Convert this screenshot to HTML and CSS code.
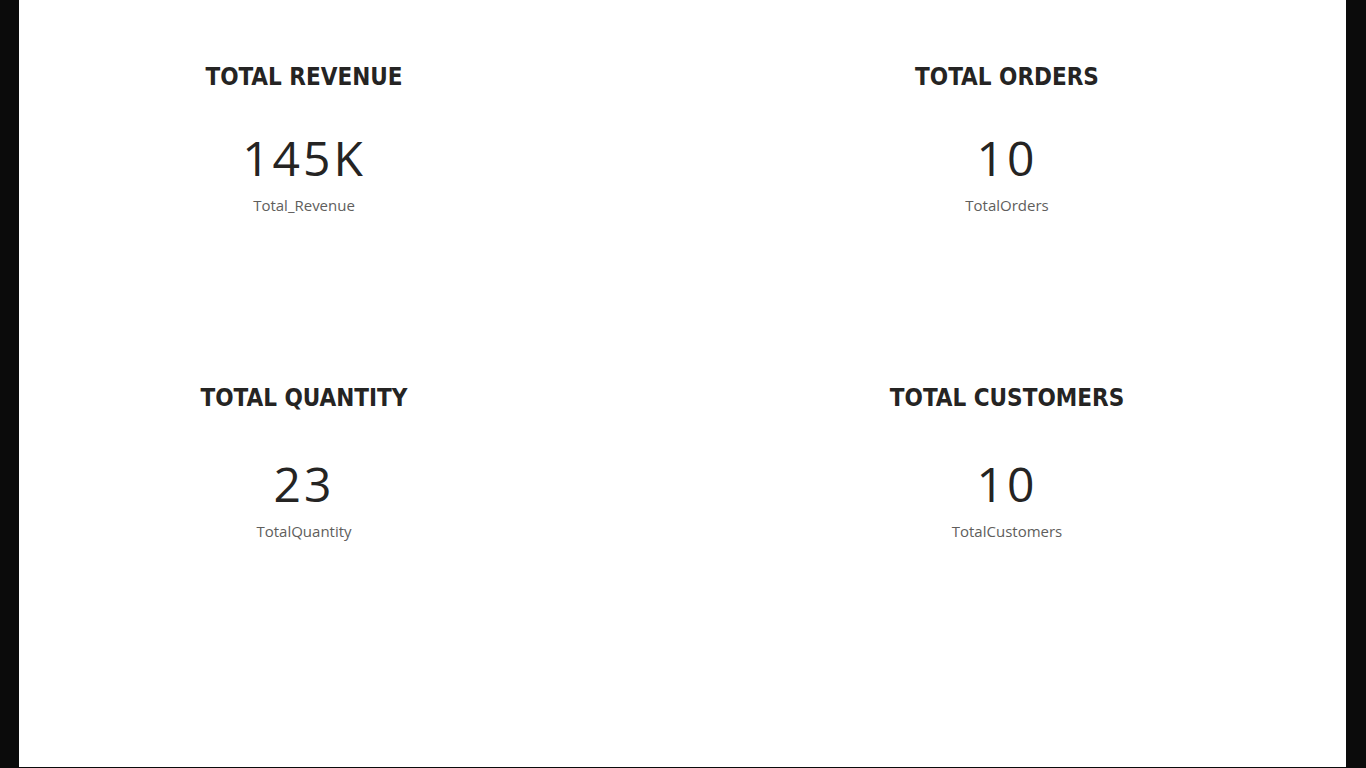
FILE: index.html
```html
<!DOCTYPE html>
<html>
<head>
<meta charset="utf-8">
<link rel="stylesheet" href="styles.css">
</head>
<body>
<div class="canvas">
  <div class="grid">
    <div class="card card-left">
      <div class="title">TOTAL REVENUE</div>
      <div class="value">145K</div>
      <div class="label">Total_Revenue</div>
    </div>
    <div class="card card-right">
      <div class="title">TOTAL ORDERS</div>
      <div class="value">10</div>
      <div class="label">TotalOrders</div>
    </div>
    <div class="card card-left card-low">
      <div class="title">TOTAL QUANTITY</div>
      <div class="value">23</div>
      <div class="label">TotalQuantity</div>
    </div>
    <div class="card card-right card-low">
      <div class="title">TOTAL CUSTOMERS</div>
      <div class="value">10</div>
      <div class="label">TotalCustomers</div>
    </div>
  </div>
</div>
</body>
</html>
```

FILE: styles.css
```css
html, body {
  margin: 0;
  padding: 0;
  background: #0b0b0b;
  width: 1366px;
  height: 768px;
  overflow: hidden;
}
.canvas {
  margin-left: 19px;
  width: 1327px;
  height: 767px;
  background: #ffffff;
}
.grid {
  display: grid;
  grid-template-columns: 570px 1fr;
  grid-auto-rows: 326px;
  padding-top: 60px;
}
.card {
  display: flex;
  flex-direction: column;
  align-items: center;
}
.card-right {
  padding-left: 79px;
}
.title {
  font-family: "DejaVu Sans Condensed", "DejaVu Sans", sans-serif;
  font-weight: bold;
  font-size: 24px;
  line-height: 34px;
  color: #252423;
}
.value {
  margin-top: 34px;
  font-family: "Open Sans", sans-serif;
  font-weight: 400;
  font-size: 48px;
  line-height: 60px;
  letter-spacing: 3px;
  color: #252423;
}
.label {
  margin-top: 7px;
  font-family: "Open Sans", sans-serif;
  font-size: 15px;
  line-height: 20px;
  color: #605e5c;
}
.card-low .title {
  margin-top: -5px;
}
.card-low .value {
  margin-top: 39px;
}
```
